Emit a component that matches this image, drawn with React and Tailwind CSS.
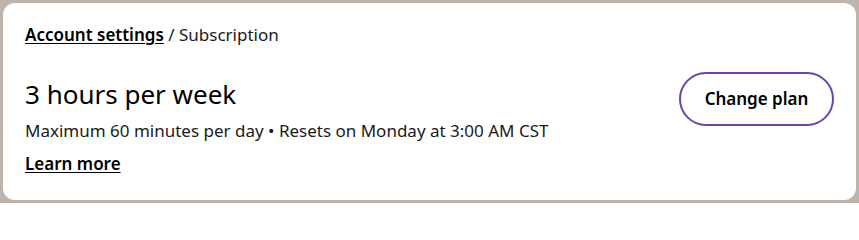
import React from "react";

const SubscriptionCard = () => {
  return (
    <div className="flex h-[203px] w-[859px] bg-[#beb4ac] p-[3px]">
      <div className="flex flex-1 flex-col rounded-[12px] bg-white px-[22px] pt-[20px] font-['Noto_Sans',sans-serif] text-[#1a1a1a]">
        {/* Breadcrumb */}
        <div className="text-[17px] leading-[24px]">
          <a href="#" className="font-semibold text-black underline underline-offset-2">
            Account settings
          </a>
          <span> / Subscription</span>
        </div>

        <div className="mt-[30px] flex items-start justify-between">
          <div className="flex flex-col">
            <h2 className="text-[26px] leading-[34px] text-black">3 hours per week</h2>
            <p className="mt-[8px] text-[17px] leading-[24px]">
              Maximum 60 minutes per day • Resets on Monday at 3:00 AM CST
            </p>
            <a
              href="#"
              className="mt-[9px] self-start text-[17px] font-semibold leading-[24px] text-black underline underline-offset-2"
            >
              Learn more
            </a>
          </div>
          <button className="mt-[-5px] h-[54px] w-[155px] rounded-full border-2 border-[#6b46a6] bg-white text-[17px] font-semibold text-black">
            Change plan
          </button>
        </div>
      </div>
    </div>
  );
};

export default function App() {
  return <SubscriptionCard />;
}
